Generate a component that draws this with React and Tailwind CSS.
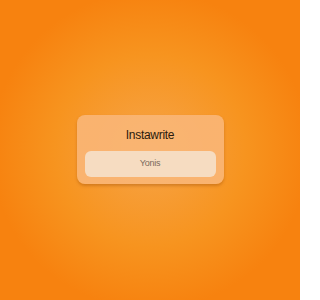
export default function App() {
  return (
    <div
      className="w-[300px] h-[300px] flex items-center justify-center bg-[radial-gradient(circle_at_center,#f6a448_0%,#f7941f_45%,#f7820f_75%)]"
      style={{ fontFamily: "'Liberation Sans', Arial, sans-serif" }}
    >
      <div className="w-[147px] h-[69px] -mt-[2px] rounded-[8px] bg-[#f9b677]/90 shadow-[0_2px_3px_rgba(150,70,0,0.35)] px-[8px] pt-[12px] flex flex-col items-center">
        <h1 className="text-[12px] leading-[16px] tracking-[-0.3px] text-[#2b1a0c]">Instawrite</h1>
        <div className="mt-[8px] w-full h-[26px] rounded-[6px] bg-[#f6dcc1] flex items-center justify-center">
          <span className="text-[9px] tracking-[-0.2px] text-[#7a6a5c]">Yonis</span>
        </div>
      </div>
    </div>
  );
}
